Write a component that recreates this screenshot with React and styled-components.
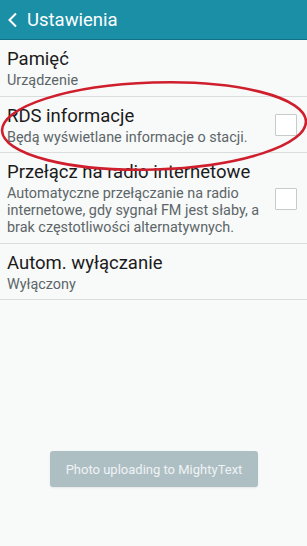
import styled, { createGlobalStyle } from "styled-components";

const GlobalStyle = createGlobalStyle`
  html, body {
    margin: 0;
    padding: 0;
    background: #f8f9f9;
    font-family: Roboto, "Noto Sans", sans-serif;
  }
`;

const Page = styled.div`
  position: relative;
  min-height: 100vh;
  background: #f8f9f9;
  overflow: hidden;
`;

const Header = styled.div`
  display: flex;
  align-items: center;
  gap: 9px;
  height: 39px;
  padding-left: 8px;
  background: #1a8fa6;
  border-bottom: 1px solid #137286;
  color: #fff;
  font-size: 18.5px;
`;

const List = styled.div`
  display: flex;
  flex-direction: column;
`;

const Row = styled.div`
  display: flex;
  align-items: center;
  padding: 8px 10px 6.5px 7px;
  border-bottom: 1px solid #d9dddd;
`;

const Texts = styled.div`
  flex: 1;
  display: flex;
  flex-direction: column;
`;

const Title = styled.div`
  font-size: 18.5px;
  line-height: 22px;
  color: #1b1b1b;
`;

const Sub = styled.div`
  margin-top: 2px;
  font-size: 14.4px;
  line-height: 17px;
  color: #5c6668;
`;

const Check = styled.div`
  flex: none;
  width: 20px;
  height: 20px;
  margin-left: 12px;
  background: #fff;
  border: 1px solid #c6cbcc;
  border-radius: 1px;
`;

const Toast = styled.div`
  position: absolute;
  left: 50px;
  top: 451px;
  width: 208px;
  height: 36px;
  display: flex;
  align-items: center;
  justify-content: center;
  background: #aebfc4;
  border-radius: 3px;
  box-shadow: 0 1px 2px rgba(0, 0, 0, 0.08);
  color: #eef3f4;
  font-size: 13px;
`;

const Mark = styled.svg`
  position: absolute;
  left: 0;
  top: 0;
  pointer-events: none;
`;

const items = [
  { title: "Pamięć", sub: "Urządzenie" },
  { title: "RDS informacje", sub: "Będą wyświetlane informacje o stacji.", check: true },
  {
    title: "Przełącz na radio internetowe",
    sub: "Automatyczne przełączanie na radio internetowe, gdy sygnał FM jest słaby, a brak częstotliwości alternatywnych.",
    check: true,
  },
  { title: "Autom. wyłączanie", sub: "Wyłączony" },
];

export default function App() {
  return (
    <Page>
      <GlobalStyle />
      <Header>
        <svg width="10" height="16" viewBox="0 0 10 16">
          <polyline points="8,1.5 1.5,8 8,14.5" fill="none" stroke="#fff" strokeWidth="2" />
        </svg>
        Ustawienia
      </Header>
      <List>
        {items.map((it) => (
          <Row key={it.title}>
            <Texts>
              <Title>{it.title}</Title>
              <Sub>{it.sub}</Sub>
            </Texts>
            {it.check && <Check />}
          </Row>
        ))}
      </List>
      <Mark width="307" height="200" viewBox="0 0 307 200">
        <ellipse
          cx="154"
          cy="126"
          rx="152"
          ry="43.5"
          transform="rotate(-1.8 154 126)"
          fill="none"
          stroke="#cf1f2d"
          strokeWidth="2.6"
        />
      </Mark>
      <Toast>Photo uploading to MightyText</Toast>
    </Page>
  );
}
